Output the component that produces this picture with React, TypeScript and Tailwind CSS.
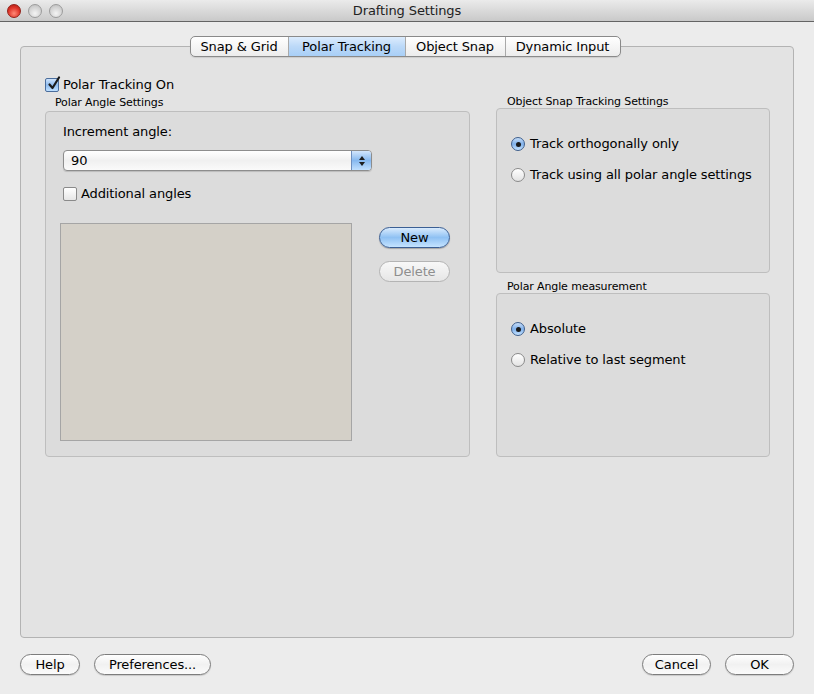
import React from "react";

const font = "font-['Lucida_Grande','DejaVu_Sans',sans-serif] tracking-[-0.12px]";

function CheckBox({ checked }: { checked?: boolean }) {
  return (
    <span
      className={
        "relative w-[14px] h-[14px] rounded-[2px] border shrink-0 " +
        (checked
          ? "border-[#4a6d9c] bg-gradient-to-b from-[#cfe3fb] via-[#8fbcef] to-[#bfe0ff]"
          : "border-[#8a8a8a] bg-gradient-to-b from-[#ffffff] to-[#e6e6e6]")
      }
    >
      {checked && (
        <svg className="absolute left-[1px] -top-[3px]" width="14" height="15" viewBox="0 0 14 15">
          <path d="M2.5 8.5 L5.5 12 L12 1.5" fill="none" stroke="#1b1b1b" strokeWidth="2.2" strokeLinecap="round" strokeLinejoin="round" />
        </svg>
      )}
    </span>
  );
}

function Radio({ on }: { on?: boolean }) {
  return (
    <span
      className={
        "flex items-center justify-center w-[14px] h-[14px] rounded-full border shrink-0 " +
        (on
          ? "border-[#3f5f8c] bg-gradient-to-b from-[#c6ddf8] via-[#7fb0ea] to-[#c4e2ff]"
          : "border-[#8a8a8a] bg-gradient-to-b from-[#ffffff] to-[#e3e3e3]")
      }
    >
      {on && <span className="w-[5px] h-[5px] rounded-full bg-[#1a1a1a]" />}
    </span>
  );
}

function Button({ label, w, blue, disabled }: { label: string; w: string; blue?: boolean; disabled?: boolean }) {
  return (
    <div
      className={
        w +
        " h-[21px] rounded-full border flex items-center justify-center text-[13px] leading-none " +
        (blue
          ? "border-[#3b5f94] bg-gradient-to-b from-[#d9ebfd] via-[#8fc1f3] to-[#c4e3ff] text-black shadow-[0_1px_1px_rgba(0,0,0,0.25)]"
          : disabled
          ? "border-[#b4b4b4] bg-gradient-to-b from-[#f8f8f8] to-[#e6e6e6] text-[#8e8e8e]"
          : "border-[#7d7d7d] bg-gradient-to-b from-[#ffffff] via-[#f1f1f1] to-[#fbfbfb] text-black shadow-[0_1px_1px_rgba(0,0,0,0.15)]")
      }
    >
      {label}
    </div>
  );
}

function GroupBox({ children, className }: { children?: React.ReactNode; className: string }) {
  return (
    <div className={"border border-[#bebebe] rounded-[4px] bg-[#dcdcdc] " + className}>{children}</div>
  );
}

export default function App() {
  const tabs = [
    { label: "Snap & Grid", w: "w-[97px]" },
    { label: "Polar Tracking", w: "w-[117px]", active: true },
    { label: "Object Snap", w: "w-[100px]" },
    { label: "Dynamic Input", w: "w-[115px]" },
  ];

  return (
    <div className={"w-[814px] h-[694px] bg-[#ececec] flex flex-col text-black " + font}>
      {/* title bar */}
      <div className="relative h-[22px] shrink-0 bg-gradient-to-b from-[#ebebeb] to-[#c9c9c9] border-b border-[#646464] flex items-center justify-center">
        <div className="absolute left-[7px] top-[4px] flex gap-[7px]">
          <span className="w-[14px] h-[14px] rounded-full border border-[#932018] bg-[radial-gradient(circle_at_50%_70%,#ff8a78,#e0362a_55%,#a9190f)]" />
          <span className="w-[14px] h-[14px] rounded-full border border-[#9c9c9c] bg-[radial-gradient(circle_at_50%_70%,#f4f4f4,#d2d2d2_60%,#b9b9b9)]" />
          <span className="w-[14px] h-[14px] rounded-full border border-[#9c9c9c] bg-[radial-gradient(circle_at_50%_70%,#f4f4f4,#d2d2d2_60%,#b9b9b9)]" />
        </div>
        <span className="text-[13px] text-[#222]">Drafting Settings</span>
      </div>

      <div className="flex-1 flex flex-col px-[20px]">
        {/* tabs */}
        <div className="relative z-10 mt-[14px] flex justify-center -ml-[4px]">
          <div className="flex h-[21px] rounded-[5px] border border-[#8a8a8a] overflow-hidden bg-gradient-to-b from-[#ffffff] to-[#ececec] shadow-[0_1px_1px_rgba(0,0,0,0.1)]">
            {tabs.map((t, i) => (
              <div
                key={t.label}
                className={
                  t.w +
                  " flex items-center justify-center text-[13px] leading-none " +
                  (i > 0 ? "border-l border-[#a9a9a9] " : "") +
                  (t.active ? "bg-gradient-to-b from-[#dcecfd] via-[#bcd9f8] to-[#a8cff7]" : "")
                }
              >
                {t.label}
              </div>
            ))}
          </div>
        </div>

        {/* tab box */}
        <div className="-mt-[11px] h-[592px] border border-[#b3b3b3] rounded-[4px] bg-[#e3e3e3] pl-[24px] pt-[30px] flex gap-[26px] items-start">
          {/* left column */}
          <div className="w-[425px] flex flex-col">
            <div className="h-[16px] flex items-center gap-[4px]">
              <CheckBox checked />
              <span className="text-[13px] leading-[16px]">Polar Tracking On</span>
            </div>
            <div className="mt-[3px] pl-[10px] text-[11px] leading-[13px]">Polar Angle Settings</div>
            <GroupBox className="mt-[2px] h-[346px] pl-[17px] pt-[12px] flex flex-col">
              <div className="text-[13px] leading-[16px]">Increment angle:</div>
              <div className="mt-[10px] w-[309px] h-[21px] rounded-[4px] border border-[#8d8d8d] bg-gradient-to-b from-[#ffffff] via-[#f0f0f0] to-[#fafafa] flex shadow-[0_1px_1px_rgba(0,0,0,0.15)] overflow-hidden">
                <div className="flex-1 pl-[7px] flex items-center text-[13px] leading-none">90</div>
                <div className="w-[20px] border-l border-[#6f8fbf] bg-gradient-to-b from-[#d3e6fc] via-[#86b8ef] to-[#c1e0ff] flex flex-col items-center justify-center gap-[2px]">
                  <svg width="6" height="4" viewBox="0 0 6 4"><path d="M3 0 L6 4 L0 4 Z" fill="#1d1d1d" /></svg>
                  <svg width="6" height="4" viewBox="0 0 6 4"><path d="M0 0 L6 0 L3 4 Z" fill="#1d1d1d" /></svg>
                </div>
              </div>
              <div className="mt-[15px] h-[16px] flex items-center gap-[4px]">
                <CheckBox />
                <span className="text-[13px] leading-[16px]">Additional angles</span>
              </div>
              <div className="mt-[21px] -ml-[3px] flex items-start gap-[27px]">
                <div className="w-[292px] h-[218px] border border-[#a5a5a5] bg-[#d4d0c8]" />
                <div className="mt-[4px] flex flex-col gap-[13px]">
                  <Button label="New" w="w-[71px]" blue />
                  <Button label="Delete" w="w-[71px]" disabled />
                </div>
              </div>
            </GroupBox>
          </div>

          {/* right column */}
          <div className="w-[274px] mt-[18px] flex flex-col">
            <div className="pl-[11px] text-[11px] leading-[13px]">Object Snap Tracking Settings</div>
            <GroupBox className="h-[165px] pl-[14px] pt-[27px] flex flex-col gap-[15px]">
              <div className="h-[16px] flex items-center gap-[5px]">
                <Radio on />
                <span className="text-[13px] leading-[16px]">Track orthogonally only</span>
              </div>
              <div className="h-[16px] flex items-center gap-[5px]">
                <Radio />
                <span className="text-[13px] leading-[16px]">Track using all polar angle settings</span>
              </div>
            </GroupBox>
            <div className="mt-[7px] pl-[11px] text-[11px] leading-[13px]">Polar Angle measurement</div>
            <GroupBox className="h-[164px] pl-[14px] pt-[27px] flex flex-col gap-[15px]">
              <div className="h-[16px] flex items-center gap-[5px]">
                <Radio on />
                <span className="text-[13px] leading-[16px]">Absolute</span>
              </div>
              <div className="h-[16px] flex items-center gap-[5px]">
                <Radio />
                <span className="text-[13px] leading-[16px]">Relative to last segment</span>
              </div>
            </GroupBox>
          </div>
        </div>

        {/* bottom buttons */}
        <div className="mt-[16px] flex justify-between">
          <div className="flex gap-[14px]">
            <Button label="Help" w="w-[60px]" />
            <Button label="Preferences..." w="w-[117px]" />
          </div>
          <div className="flex gap-[14px]">
            <Button label="Cancel" w="w-[69px]" />
            <Button label="OK" w="w-[69px]" />
          </div>
        </div>
      </div>
    </div>
  );
}
